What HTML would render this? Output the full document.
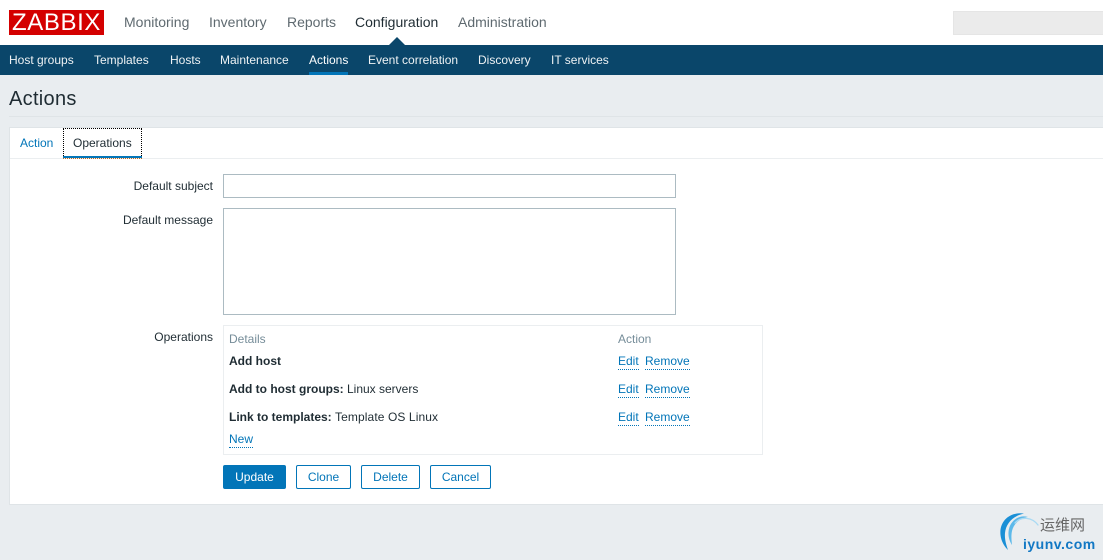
<!DOCTYPE html>
<html><head><meta charset="utf-8"><style>
html,body{margin:0;padding:0}
body{width:1103px;height:560px;overflow:hidden;position:relative;background:#e9edf0;font-family:"Liberation Sans",sans-serif;font-size:12px;color:#1f2c33}
.a{position:absolute;white-space:nowrap;line-height:14px}
.box{position:absolute;box-sizing:border-box}
.top{font-size:14px;line-height:16px;color:#555}
.sub{color:#eef2f4;line-height:14px;top:53px}
.lnk{color:#0275b8;border-bottom:1px dotted #0275b8;line-height:14px;height:15px}
.btn{position:absolute;box-sizing:border-box;top:465px;height:24px;border:1px solid #0275b8;border-radius:2px;color:#0275b8;text-align:center;line-height:22px;background:#fff}
.r{text-align:right;width:150px;left:63px}
</style></head><body>
<div class="box" style="left:0;top:0;width:1103px;height:45px;background:#fff"></div>
<div class="box" style="left:9px;top:10px;width:95px;height:25px;background:#d40000"></div>
<div class="a" style="left:9px;top:10px;width:95px;height:25px;line-height:26px;font-size:24px;color:#fff;text-align:center;letter-spacing:.6px">ZABBIX</div>
<div class="a top" style="left:124px;top:14px;color:#5f6a70">Monitoring</div>
<div class="a top" style="left:209px;top:14px;color:#5f6a70">Inventory</div>
<div class="a top" style="left:287px;top:14px;color:#5f6a70">Reports</div>
<div class="a top" style="left:355px;top:14px;color:#1f2c33">Configuration</div>
<div class="a top" style="left:458px;top:14px;color:#5f6a70">Administration</div>
<div class="box" style="left:953px;top:11px;width:150px;height:24px;background:#ebebeb;border:1px solid #e5e5e5;border-right:0"></div>
<div class="box" style="left:0;top:45px;width:1103px;height:30px;background:#0a466a"></div>
<svg class="box" style="left:388px;top:37px" width="18" height="8"><path d="M1 8L9 0L17 8Z" fill="#0a466a"/></svg>
<div class="a sub" style="left:9px">Host groups</div>
<div class="a sub" style="left:94px">Templates</div>
<div class="a sub" style="left:170px">Hosts</div>
<div class="a sub" style="left:220px">Maintenance</div>
<div class="a sub" style="left:309px;color:#fff">Actions</div>
<div class="box" style="left:309px;top:72px;width:39px;height:3px;background:#0275b8"></div>
<div class="a sub" style="left:368px">Event correlation</div>
<div class="a sub" style="left:478px">Discovery</div>
<div class="a sub" style="left:551px">IT services</div>
<div class="a" style="left:9px;top:88px;font-size:20px;line-height:22px;letter-spacing:.3px;color:#1f2c33">Actions</div>
<div class="box" style="left:9px;top:116px;width:1094px;height:1px;background:#dfe4e7"></div>
<div class="box" style="left:9px;top:127px;width:1094px;height:378px;background:#fff;border:1px solid #dfe4e7;border-right:0"></div>
<div class="box" style="left:10px;top:158px;width:1093px;height:1px;background:#ebeef0"></div>
<div class="a" style="left:20px;top:136px;color:#0275b8">Action</div>
<div class="box" style="left:63px;top:128px;width:79px;height:30px;border:1px dotted #000;border-bottom:0"></div>
<div class="box" style="left:63px;top:156px;width:79px;height:2px;background:#0275b8"></div>
<div class="box" style="left:63px;top:158px;width:79px;height:1px;border-top:1px dotted #c06a20"></div>
<div class="a" style="left:73px;top:136px;color:#1f2c33">Operations</div>
<div class="a r" style="top:179px">Default subject</div>
<div class="a r" style="top:213px">Default message</div>
<div class="a r" style="top:330px">Operations</div>
<div class="box" style="left:223px;top:174px;width:453px;height:24px;border:1px solid #acbbc2;background:#fff"></div>
<div class="box" style="left:223px;top:208px;width:453px;height:107px;border:1px solid #acbbc2;background:#fff"></div>
<div class="box" style="left:223px;top:325px;width:540px;height:130px;border:1px solid #ebeef0;background:#fff"></div>
<div class="a" style="left:229px;top:332px;color:#768d99">Details</div>
<div class="a" style="left:618px;top:332px;color:#768d99">Action</div>
<div class="a" style="left:229px;top:354px"><b>Add host</b></div>
<div class="a" style="left:229px;top:382px"><b>Add to host groups:</b> Linux servers</div>
<div class="a" style="left:229px;top:410px"><b>Link to templates:</b> <span style="letter-spacing:.1px">Template OS Linux</span></div>
<div class="a lnk" style="left:618px;top:354px">Edit</div><div class="a lnk" style="left:645px;top:354px">Remove</div>
<div class="a lnk" style="left:618px;top:382px">Edit</div><div class="a lnk" style="left:645px;top:382px">Remove</div>
<div class="a lnk" style="left:618px;top:410px">Edit</div><div class="a lnk" style="left:645px;top:410px">Remove</div>
<div class="a lnk" style="left:229px;top:432px">New</div>
<div class="btn" style="left:223px;width:63px;background:#0275b8;color:#fff">Update</div>
<div class="btn" style="left:296px;width:55px">Clone</div>
<div class="btn" style="left:361px;width:59px">Delete</div>
<div class="btn" style="left:430px;width:61px">Cancel</div>
<svg class="box" style="left:998px;top:510px" width="45" height="45" fill="none">
<path d="M26 3.5C12 1.5 1 11 2.5 25C3.2 31 6 36 10 40C8 34 6.5 29 7 23C8 13 15 6 26 3.5Z" fill="#1a8fd6"/>
<path d="M30 7C20 4 11 12 10.5 22C10.2 27 11.5 31 14 35C13.5 30 13 26 14 21C15.5 14 22 8 30 7Z" fill="#5cb9ea"/>
<path d="M40 15C34 7 23 6 17 13" stroke="#a9daf3" stroke-width="1.3" stroke-linecap="round"/>
</svg>
<div class="a" style="left:1040px;top:517px;font-family:'Liberation Sans','Noto Sans CJK SC',sans-serif;font-size:15px;line-height:18px;color:#666">运维网</div>
<div class="a" style="left:1023px;top:536px;font-size:14px;line-height:16px;font-weight:bold;color:#1278c4;letter-spacing:.5px">iyunv.com</div>
</body></html>
